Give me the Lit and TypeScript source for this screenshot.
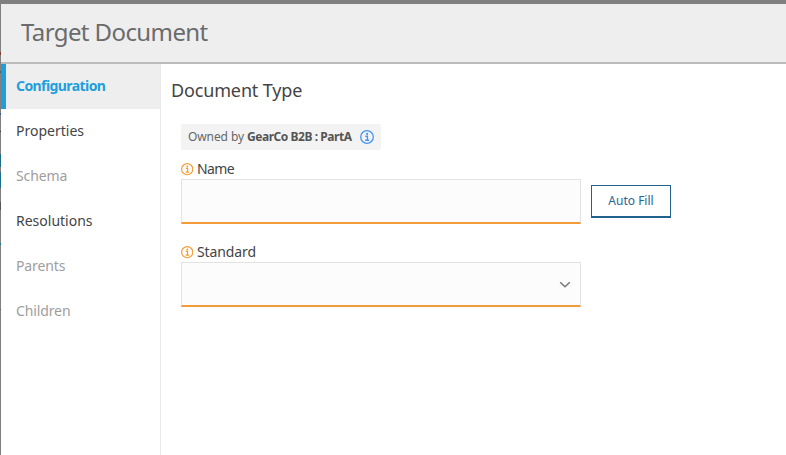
import { LitElement, html, css, svg } from "lit";
import { customElement, property } from "lit/decorators.js";

@customElement("info-icon")
class InfoIcon extends LitElement {
  static styles = css`
    :host { display: block; flex: none; }
    svg { display: block; width: 100%; height: 100%; }
  `;
  render() {
    return html`<svg viewBox="0 0 14 14" fill="none" stroke="currentColor">
      ${svg`<circle cx="7" cy="7" r="6.3" stroke-width="1.3"/>
      <path d="M5.3 6.2H7.4V10M5.2 10.2H9.1" stroke-width="1.4"/>
      <circle cx="7.1" cy="3.9" r="1.05" fill="currentColor" stroke="none"/>`}
    </svg>`;
  }
}

@customElement("form-field")
class FormField extends LitElement {
  @property() label = "";
  @property({ type: Boolean }) dropdown = false;
  static styles = css`
    :host { display: block; width: 400px; }
    .label { display: flex; align-items: center; gap: 4px; height: 18px; padding-bottom: 2px; font-size: 14px; color: #444; }
    .label info-icon { width: 12.4px; height: 12.4px; color: #f79a30; margin: 3px -0.4px 0 0; }
    .name { letter-spacing: -0.1px; }
    :host([label="Name"]) .name { letter-spacing: -0.6px; }
    .box {
      box-sizing: border-box; height: 45px; background: #fcfcfc;
      border: 1px solid #e2e2e2; border-bottom: 2px solid #f29b38;
      display: flex; align-items: center; justify-content: flex-end; padding-right: 9px;
    }
    .chevron { width: 12px; height: 8px; display: block; margin-top: 2px; }
  `;
  render() {
    return html`
      <div class="label"><info-icon></info-icon><span class="name">${this.label}</span></div>
      <div class="box">
        ${this.dropdown
          ? html`<svg class="chevron" viewBox="0 0 12 8" fill="none" stroke="#777" stroke-width="1.5"><path d="M1.2 1.2L6 5.8L10.8 1.2"/></svg>`
          : null}
      </div>`;
  }
}

@customElement("app-root")
class AppRoot extends LitElement {
  static styles = css`
    :host {
      display: flex; box-sizing: border-box; height: 455px; overflow: hidden;
      border-top: 4px solid #808080;
      background: #fff; font-family: "Noto Sans", "Open Sans", sans-serif; color: #444;
    }
    .backdrop {
      width: 1px; flex: none;
      background: linear-gradient(#808080 48px, #7a3f28 48px 51px, #808080 51px 67px, #33647a 67px 69px,
        #808080 69px 109px, #2f5f86 109px 111px, #808080 111px 127px, #333 127px 128px,
        #808080 128px 150px, #1e6c88 150px 163px, #808080 163px 168px, #1e6c88 168px 184px,
        #808080 184px 198px, #555 198px 206px, #808080 206px 239px, #1e7896 239px 241px,
        #808080 241px 305px, #606060 305px 306px, #808080 306px);
    }
    .dialog { flex: 1; min-width: 0; }
    .header {
      box-sizing: border-box; height: 60px; background: #eee; border-bottom: 2px solid #bbb;
      padding-left: 20px; font-size: 24px; line-height: 56px; color: #6b6b6b; letter-spacing: -0.6px;
    }
    .body { display: flex; height: 391px; }
    .nav { box-sizing: border-box; width: 160px; border-right: 1px solid #ebebeb; flex: none; }
    .item { height: 45px; line-height: 44px; padding-left: 15px; font-size: 14px; color: #444; }
    .item.off { color: #9e9e9e; letter-spacing: -0.12px; }
    .item.active {
      background: #eee; border-left: 5px solid #1e9fdc; padding-left: 10px;
      color: #1e9fdc; font-weight: 700; letter-spacing: -0.58px;
    }
    .main { padding-left: 10px; }
    .heading { font-size: 18px; line-height: 24px; margin-top: 14px; letter-spacing: -0.15px; color: #444; }
    .form { padding-left: 10px; }
    .owner {
      box-sizing: border-box; width: 200px; height: 26px; margin-top: 22px; padding: 0 7px;
      display: flex; align-items: center; justify-content: space-between;
      background: #f3f3f3; border-radius: 2px; font-size: 12px; line-height: 24px; color: #666; white-space: nowrap;
    }
    .owner .text { letter-spacing: -0.1px; padding-bottom: 1px; }
    .owner b { color: #555; letter-spacing: -0.45px; }
    .owner info-icon { width: 14px; height: 14px; color: #4294fa; }
    .row { display: flex; margin-top: 9px; gap: 10px; }
    .row.second { margin-top: 18px; }
    .button {
      box-sizing: border-box; width: 80px; height: 33px; margin: 26px 0 0; padding: 0 0 1px;
      border: 1px solid #22618f; border-bottom-width: 2px; background: #fff;
      font: 12px "Noto Sans", sans-serif; color: #2b6593;
    }
  `;
  render() {
    const items = [
      ["Configuration", "active"], ["Properties", ""], ["Schema", "off"],
      ["Resolutions", ""], ["Parents", "off"], ["Children", "off"],
    ];
    return html`
      <div class="backdrop"></div>
      <div class="dialog">
        <div class="header"><span class="title">Target Document</span></div>
        <div class="body">
          <div class="nav">${items.map(([n, c]) => html`<div class="item ${c}"><span>${n}</span></div>`)}</div>
          <div class="main">
            <div class="heading">Document Type</div>
            <div class="form">
              <div class="owner"><span class="text">Owned by <b>GearCo B2B : PartA</b></span><info-icon></info-icon></div>
              <div class="row"><form-field label="Name"></form-field><button class="button">Auto Fill</button></div>
              <div class="row second"><form-field label="Standard" dropdown></form-field></div>
            </div>
          </div>
        </div>
      </div>`;
  }
}
